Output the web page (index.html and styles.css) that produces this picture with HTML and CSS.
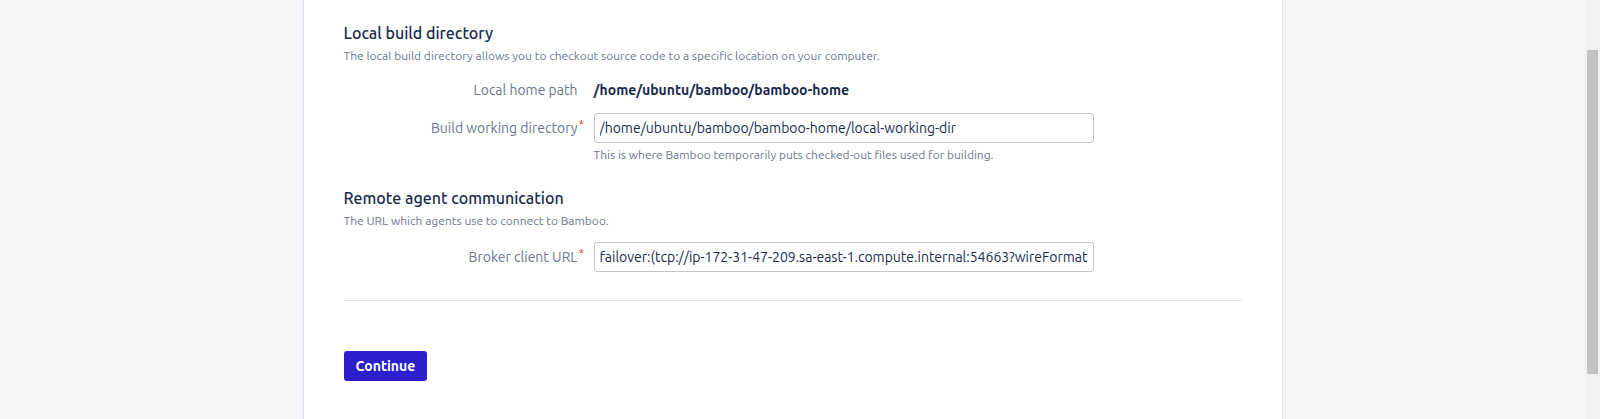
FILE: index.html
```html
<!DOCTYPE html>
<html>

<head>
    <title>Bamboo setup - General configuration</title>
    <link rel="stylesheet" href="styles.css">
</head>

<body>

    <div class="page">
        <div class="panel">
            <form>
                <h2>Local build directory</h2>
                <p class="description">The local build directory allows you to checkout source code to a specific location on your computer.</p>

                <div class="field-row field-static">
                    <label>Local home path</label>
                    <strong class="value">/home/ubuntu/bamboo/bamboo-home</strong>
                </div>
                <div class="field-row">
                    <label for="buildWorkingDir">Build working directory<span class="required">*</span></label>
                    <input type="text" id="buildWorkingDir" class="text" value="/home/ubuntu/bamboo/bamboo-home/local-working-dir">
                </div>
                <div class="field-help">This is where Bamboo temporarily puts checked-out files used for building.</div>

                <h2 class="section-second">Remote agent communication</h2>
                <p class="description">The URL which agents use to connect to Bamboo.</p>

                <div class="field-row">
                    <label for="brokerClientUrl">Broker client URL<span class="required">*</span></label>
                    <input type="text" id="brokerClientUrl" class="text" value="failover:(tcp://ip-172-31-47-209.sa-east-1.compute.internal:54663?wireFormat.maxInactivityDuration=300000)?initialReconnectDelay=15000&amp;maxReconnectAttempts=10">
                </div>

                <div class="buttons">
                    <button type="button" class="button-primary">Continue</button>
                </div>
            </form>
        </div>
    </div>

    <div class="scrollbar">
        <div class="scrollbar-thumb"></div>
    </div>

</body>

</html>
```

FILE: styles.css
```css
body {
    font-family: Ubuntu, "Noto Sans", sans-serif;
    background: #f4f5f7;
    color: #172b4d;
    margin: 0;
    padding: 0;
    display: flex;
    height: 419px;
    overflow: hidden;
}

.page {
    flex: 1;
    display: flex;
    justify-content: center;
}

.panel {
    width: 898px;
    padding: 23px 40px 0;
    background: #fff;
    border-left: 1px solid #dfe1e6;
    border-right: 1px solid #dfe1e6;
}

h2 {
    font-size: 16px;
    line-height: 20px;
    font-weight: 500;
    margin: 0;
}

.section-second {
    margin-top: 25px;
}

.description {
    font-size: 12px;
    line-height: 16px;
    color: #6b778c;
    margin: 5px 0 0;
}

.field-row {
    display: flex;
    align-items: center;
    margin-top: 13px;
}

.field-static {
    margin-top: 16px;
}

.field-row label {
    position: relative;
    width: 234px;
    margin-right: 16px;
    text-align: right;
    font-size: 14px;
    line-height: 20px;
    color: #6b778c;
}

.required {
    position: absolute;
    top: -4px;
    left: 100%;
    padding-left: 1px;
    color: #de350b;
    font-size: 12px;
}

.value {
    font-size: 14px;
    line-height: 20px;
    font-weight: bold;
}

input.text {
    width: 500px;
    height: 30px;
    box-sizing: border-box;
    padding: 0 5px;
    font-family: inherit;
    font-size: 14px;
    color: #172b4d;
    border: 1px solid #c1c7d0;
    border-radius: 3px;
    background: #fff;
}

.field-help {
    margin: 4px 0 0 250px;
    font-size: 12px;
    line-height: 16px;
    color: #6b778c;
}

.buttons {
    margin-top: 28px;
    padding-top: 50px;
    border-top: 1px solid #dfe1e6;
}

.button-primary {
    background-color: #2b1fce;
    color: #fff;
    border: none;
    border-radius: 3px;
    font-family: inherit;
    font-size: 14px;
    font-weight: bold;
    height: 30px;
    padding: 0 12px;
    cursor: pointer;
}

.scrollbar {
    width: 15px;
    box-sizing: border-box;
    padding: 50px 2px 0;
    background: #f1f1f1;
}

.scrollbar-thumb {
    height: 324px;
    background: #c1c1c1;
}
```
